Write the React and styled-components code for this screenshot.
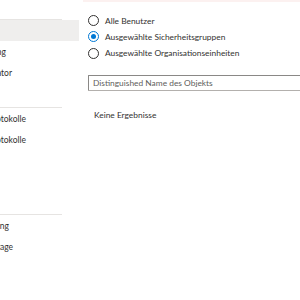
import React from "react";
import styled, { createGlobalStyle } from "styled-components";

const Global = createGlobalStyle`
  html, body { margin: 0; padding: 0; background: #ffffff; overflow: hidden; }
  body { font-family: "Segoe UI", Lato, "Noto Sans", sans-serif; color: #323130; }
`;

const Page = styled.div`
  display: flex;
  width: 300px;
  height: 300px;
  overflow: hidden;
  background: #fff;
`;

const Nav = styled.nav`
  width: 75px;
  flex-shrink: 0;
  display: flex;
  flex-direction: column;
  padding-top: 19px;
`;

const Section = styled.div`
  display: flex;
  flex-direction: column;
  margin-top: ${(p) => p.$top || 0}px;
`;

const Divider = styled.div`
  height: 1px;
  width: 62px;
  background: #e6e4e2;
`;

const NavItem = styled.div`
  height: 21px;
  display: flex;
  align-items: center;
  justify-content: flex-end;
  overflow: hidden;
  padding-right: ${(p) => 75 - p.$end}px;
  background: ${(p) => (p.$selected ? "#efeeed" : "transparent")};
  font-size: 8.5px;
  color: #323130;
`;

const NavLabel = styled.span`
  white-space: nowrap;
  flex-shrink: 0;
`;

const Main = styled.main`
  flex: 1;
  margin-left: 8px;
  display: flex;
  flex-direction: column;
  min-width: 0;
`;

const MessageBar = styled.div`
  height: 2px;
  background: #fcf1f0;
`;

const RadioGroup = styled.div`
  display: flex;
  flex-direction: column;
  margin-top: 10.5px;
  padding-left: 5px;
`;

const RadioRow = styled.label`
  height: 16.3px;
  display: flex;
  align-items: center;
  gap: 6px;
  font-size: 8.4px;
  color: #323130;
`;

const RadioCircle = styled.span`
  width: 11px;
  height: 11px;
  box-sizing: border-box;
  border-radius: 50%;
  border: 1px solid ${(p) => (p.$checked ? "#0078d4" : "#323130")};
  display: flex;
  align-items: center;
  justify-content: center;
  flex-shrink: 0;
  &::after {
    content: "";
    width: 5px;
    height: 5px;
    border-radius: 50%;
    background: ${(p) => (p.$checked ? "#0078d4" : "transparent")};
  }
`;

const SearchInput = styled.input`
  margin-top: 13.5px;
  margin-left: 5px;
  width: 260px;
  height: 16px;
  box-sizing: border-box;
  border: 1px solid #8a8886;
  border-bottom-color: #b3b0ad;
  border-radius: 1px;
  padding: 0 4px;
  font-family: inherit;
  font-size: 8.4px;
  color: #323130;
  outline: none;
  flex-shrink: 0;
  &::placeholder { color: #605e5c; }
`;

const EmptyText = styled.div`
  margin-top: 18px;
  margin-left: 11px;
  font-size: 8.4px;
  line-height: 12px;
  color: #323130;
`;

const sections = [
  {
    top: 0,
    items: [
      { label: "Übersicht", end: -4, selected: true },
      { label: "Attributzuordnung", end: 6 },
      { label: "Administrator", end: 12 },
    ],
  },
  {
    top: 24,
    items: [
      { label: "Überwachungsprotokolle", end: 26 },
      { label: "Bereitstellungsprotokolle", end: 26 },
    ],
  },
  {
    top: 64,
    items: [
      { label: "Problembehandlung", end: 9 },
      { label: "Neue Supportanfrage", end: 13 },
    ],
  },
];

const options = [
  { label: "Alle Benutzer", checked: false },
  { label: "Ausgewählte Sicherheitsgruppen", checked: true },
  { label: "Ausgewählte Organisationseinheiten", checked: false },
];

export default function App() {
  return (
    <>
      <Global />
      <Page>
        <Nav>
          {sections.map((s, i) => (
            <Section key={i} $top={s.top}>
              <Divider />
              {s.items.map((it) => (
                <NavItem key={it.label} $end={it.end} $selected={it.selected}>
                  <NavLabel>{it.label}</NavLabel>
                </NavItem>
              ))}
            </Section>
          ))}
        </Nav>
        <Main>
          <MessageBar />
          <RadioGroup>
            {options.map((o) => (
              <RadioRow key={o.label}>
                <RadioCircle $checked={o.checked} />
                {o.label}
              </RadioRow>
            ))}
          </RadioGroup>
          <SearchInput placeholder="Distinguished Name des Objekts" />
          <EmptyText>Keine Ergebnisse</EmptyText>
        </Main>
      </Page>
    </>
  );
}
